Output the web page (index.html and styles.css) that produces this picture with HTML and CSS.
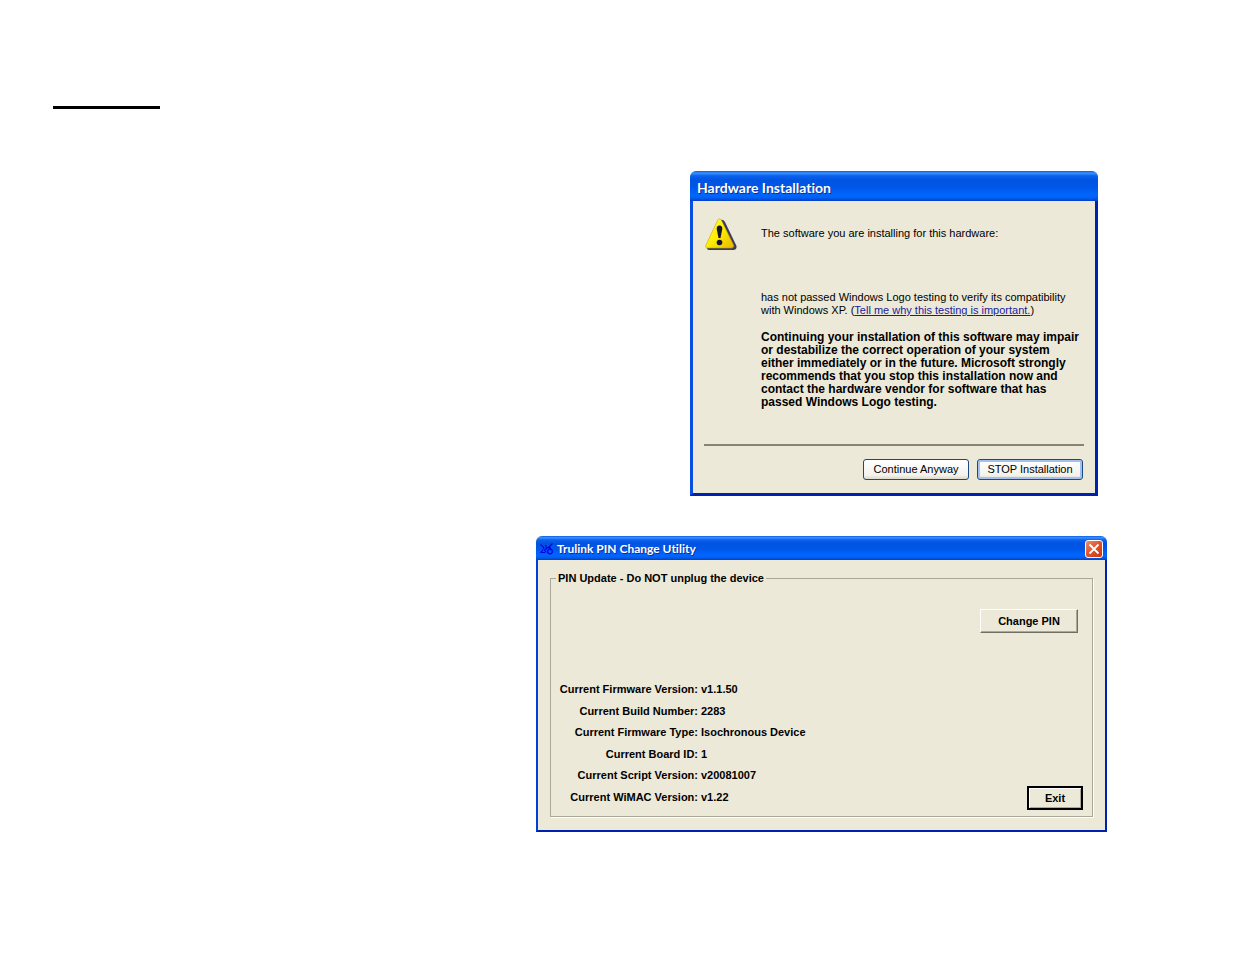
FILE: index.html
```html
<!DOCTYPE html>
<html lang="en">
<head>
    <meta charset="UTF-8">
    <meta name="viewport" content="width=device-width, initial-scale=1.0">
    <title>Trulink PIN Change Utility</title>
    <link rel="stylesheet" href="styles.css">
</head>
<body>
    <main class="page">
        <hr class="rule">

        <section class="window hardware" aria-labelledby="hardware-title">
            <header class="titlebar">
                <h1 id="hardware-title">Hardware Installation</h1>
            </header>
            <div class="hardware-body">
                <div class="message">
                    <svg class="warning" viewBox="0 0 32 32" aria-hidden="true">
                        <defs>
                            <linearGradient id="yellow" x1="0" y1="0" x2="1" y2="1">
                                <stop offset="0" stop-color="#ffff50"/>
                                <stop offset="0.5" stop-color="#ffee00"/>
                                <stop offset="1" stop-color="#e8b400"/>
                            </linearGradient>
                        </defs>
                        <path d="M16 2Q18 1 20 4L31.500 28Q32 32 28 32H4Q2 32 2 30Z" fill="#3c3b5c"/>
                        <path d="M12.500 2.500Q14.500 -1 16.500 2.500L28.500 27Q29.500 30 26 30H3Q-0.500 30 1 27Z" fill="url(#yellow)" stroke="#c0a800" stroke-width="0.600"/>
                        <path d="M11.700 11Q11.500 7.500 14.500 7.500Q17.500 7.500 17.300 11L15.500 20H13.500Z" fill="#15152c"/>
                        <circle cx="14.500" cy="24.500" r="2.800" fill="#15152c"/>
                    </svg>
                    <div class="text">
                        <p class="intro">The software you are installing for this hardware:</p>
                        <p class="logo-test">has not passed Windows Logo testing to verify its compatibility<br>with Windows XP. (<a href="#">Tell me why this testing is important.</a>)</p>
                        <p class="notice">Continuing your installation of this software may impair<br>or destabilize the correct operation of your system<br>either immediately or in the future. Microsoft strongly<br>recommends that you stop this installation now and<br>contact the hardware vendor for software that has<br>passed Windows Logo testing.</p>
                    </div>
                </div>
                <div class="actions">
                    <button class="xp-button" type="button">Continue Anyway</button>
                    <button class="xp-button default" type="button">STOP Installation</button>
                </div>
            </div>
        </section>

        <section class="window utility" aria-labelledby="utility-title">
            <header class="titlebar">
                <svg class="app-icon" viewBox="0 0 14 14" aria-hidden="true">
                    <g fill="none" stroke="#0000e8" stroke-width="1.200">
                        <path d="M0.500 2.500L3 4.500L4 7M3 7.500L1 10.500H5M5.500 3L6.500 6.500L4.500 8L6.500 10.500M6.500 6.500L9 5L12.500 1.500M9 5L11 7"/>
                        <circle cx="10" cy="9.500" r="2.300"/>
                    </g>
                </svg>
                <h2 id="utility-title">Trulink PIN Change Utility</h2>
                <button class="close" type="button" aria-label="Close">
                    <svg viewBox="0 0 16 16" aria-hidden="true">
                        <path d="M3.500 3.500L12.500 12.500M12.500 3.500L3.500 12.500" stroke="#fff" stroke-width="1.800"/>
                    </svg>
                </button>
            </header>
            <div class="utility-body">
                <fieldset>
                    <legend>PIN Update - Do NOT unplug the device</legend>
                    <button class="classic-button change" type="button">Change PIN</button>
                    <div class="details">
                        <table>
                            <tr><th scope="row">Current Firmware Version:</th><td>v1.1.50</td></tr>
                            <tr><th scope="row">Current Build Number:</th><td>2283</td></tr>
                            <tr><th scope="row">Current Firmware Type:</th><td>Isochronous Device</td></tr>
                            <tr><th scope="row">Current Board ID:</th><td>1</td></tr>
                            <tr><th scope="row">Current Script Version:</th><td>v20081007</td></tr>
                            <tr><th scope="row">Current WiMAC Version:</th><td>v1.22</td></tr>
                        </table>
                        <button class="classic-button exit" type="button">Exit</button>
                    </div>
                </fieldset>
            </div>
        </section>
    </main>
</body>
</html>
```
FILE: styles.css
```css
*{
    box-sizing: border-box;
}
body{
    margin:0;
    background-color: #fff;
    color:#000;
    font-family: "Liberation Sans", Arial, sans-serif;
    font-size:11px;
    line-height:13px;
}
h1, h2, p{
    margin:0;
}
button{
    font-family: inherit;
    font-size: inherit;
    line-height: inherit;
    color:#000;
    padding:0;
    cursor:pointer;
}
.page{
    display:flex;
    flex-direction: column;
    align-items: flex-end;
    padding:106px 128px 40px 53px;
}
.rule{
    align-self: flex-start;
    width:107px;
    height:3px;
    margin:0;
    border:0;
    background-color: #000;
}

/* windows */
.window{
    max-width:100%;
    background-color: #ece9d8;
    border-radius:6px 6px 0 0;
    overflow:hidden;
}
.titlebar{
    display:flex;
    align-items:center;
    color:#fff;
    background: linear-gradient(#0a5be0 0, #3c92ff 7%, #0a62ee 16%, #0053e1 30%, #0057e8 55%, #0066ff 80%, #0062f5 88%, #0040c8 100%);
}
.titlebar h1, .titlebar h2{
    font-family: Lato, "Open Sans", sans-serif;
    font-weight:bold;
    font-variant-ligatures: none;
    text-shadow:1px 1px #0a2f9c;
    white-space: nowrap;
}

/* hardware installation */
.hardware{
    width:408px;
    margin:62px 9px 0 0;
}
.hardware .titlebar{
    height:30px;
    padding:4px 7px 0;
}
.hardware h1{
    font-size:14px;
    line-height:18px;
}
.hardware-body{
    border:solid #0a4fe0;
    border-width:0 3px 3px;
    border-right-color:#0020b0;
    border-bottom-color:#0020b0;
    padding:17px 11px 13px;
}
.message{
    display:flex;
    gap:24px;
    padding:0 0 35px 1px;
    border-bottom:2px solid #858476;
}
.warning{
    flex:none;
    width:32px;
    height:32px;
}
.text{
    white-space: nowrap;
}
.intro{
    margin-top:9px;
}
.logo-test{
    margin-top:51px;
}
.text a{
    color:#1a1a9c;
}
.notice{
    margin-top:14px;
    font-size:12px;
    font-weight:bold;
}
.actions{
    display:flex;
    justify-content: flex-end;
    gap:8px;
    margin-top:13px;
    padding-right:1px;
}
.xp-button{
    width:106px;
    height:21px;
    border:1px solid #1c4a80;
    border-radius:3px;
    background: linear-gradient(#fff, #f3f2ec 80%, #dcd8ca);
}
.xp-button.default{
    box-shadow: inset 0 0 0 2px #a3c0f0;
}

/* pin change utility */
.utility{
    width:571px;
    margin-top:40px;
}
.utility .titlebar{
    height:24px;
    gap:3px;
    padding:2px 4px 0;
}
.app-icon{
    flex:none;
    width:14px;
    height:14px;
}
.utility h2{
    font-size:12px;
    line-height:16px;
}
.close{
    width:18px;
    height:18px;
    margin-left:auto;
    border:1px solid #fff;
    border-radius:3px;
    background: linear-gradient(135deg, #f0906c, #e0502c 50%, #c83810);
}
.close svg{
    display:block;
    width:16px;
    height:16px;
}
.utility-body{
    border:solid #0040d8;
    border-width:0 2px 2px;
    border-right-color:#0020b0;
    border-bottom-color:#0020b0;
    padding:12px 12px 13px;
    font-weight:bold;
}
fieldset{
    display:flex;
    flex-direction: column;
    margin:0;
    padding:24px 9px 6px 7px;
    border:1px solid #aca899;
    box-shadow:1px 1px #fff;
}
legend{
    padding:0 2px;
    margin-left:-2px;
}
.classic-button{
    height:24px;
    border:1px solid;
    border-color:#fff #716f64 #716f64 #fff;
    box-shadow: inset -1px -1px #aca899;
    background-color: #ece9d8;
    font-weight:bold;
}
.change{
    align-self: flex-end;
    width:98px;
    margin-right:5px;
}
.details{
    display:flex;
    justify-content: space-between;
    align-items: flex-end;
    margin-top:46px;
}
table{
    height:129px;
    margin-bottom:2px;
    border-collapse: collapse;
}
th, td{
    padding:0;
    white-space: nowrap;
}
th{
    width:140px;
    text-align:right;
}
td{
    padding-left:3px;
}
.exit{
    width:56px;
    border:2px solid #000;
    box-shadow: inset 1px 1px #fff, inset -1px -1px #aca899;
}
```
